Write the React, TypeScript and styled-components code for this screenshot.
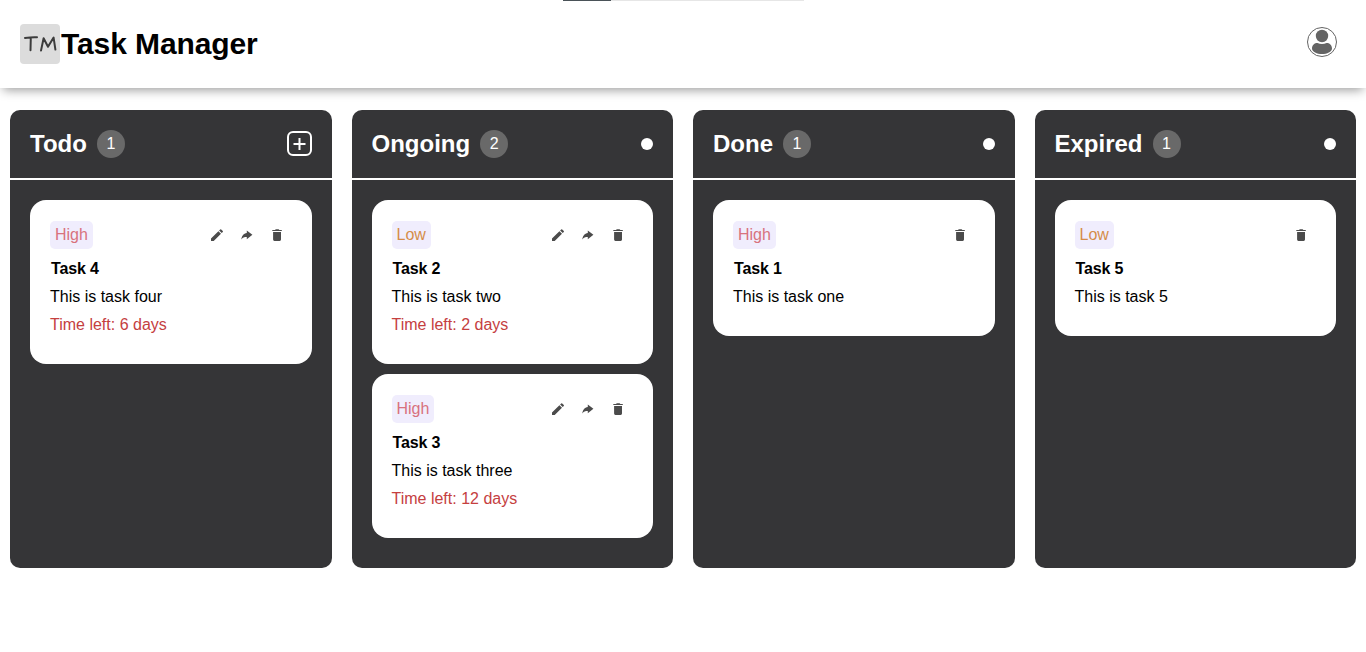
import React from "react";
import styled, { createGlobalStyle } from "styled-components";

const GlobalStyle = createGlobalStyle`
  * { box-sizing: border-box; margin: 0; padding: 0; }
  body { background: #fff; font-family: "Liberation Sans", Arial, sans-serif; font-size: 16px; color: #000; }
`;

const Page = styled.div`
  height: 652px;
  overflow: hidden;
`;

const Progress = styled.div`
  position: absolute;
  top: 0;
  left: 563px;
  width: 241px;
  height: 1px;
  background: #e6e6e6;
`;

const ProgressValue = styled.div`
  width: 48px;
  height: 1px;
  background: #4a5258;
`;

const Header = styled.header`
  height: 88px;
  padding: 0 29px 0 20px;
  display: flex;
  align-items: center;
  justify-content: space-between;
  box-shadow: 0 5px 10px -3px rgba(0, 0, 0, 0.4);
`;

const Brand = styled.div`
  display: flex;
  align-items: center;
  gap: 1px;
`;

const Logo = styled.svg`
  width: 40px;
  height: 40px;
  border-radius: 4px;
  background: #dcdcdc;
`;

const Title = styled.h1`
  font-size: 30px;
  line-height: 40px;
  font-weight: 700;
  letter-spacing: -0.1px;
`;

const Avatar = styled.svg`
  width: 30px;
  height: 30px;
  margin-bottom: 4px;
`;

const Board = styled.main`
  display: grid;
  grid-template-columns: repeat(4, 1fr);
  gap: 20px;
  padding: 22px 10px;
`;

const Column = styled.section`
  height: 458px;
  border-radius: 10px;
  background: #353537;
`;

const ColumnHeader = styled.div`
  height: 70px;
  padding: 0 20px;
  display: flex;
  align-items: center;
  justify-content: space-between;
  border-bottom: 2px solid #fff;
`;

const ColumnName = styled.div`
  display: flex;
  align-items: center;
  gap: 10px;
  color: #fff;
`;

const ColumnTitle = styled.h2`
  font-size: 24px;
  line-height: 28px;
`;

const Count = styled.span`
  width: 28px;
  height: 28px;
  border-radius: 50%;
  background: #696969;
  text-align: center;
  line-height: 27px;
`;

const AddButton = styled.button`
  width: 25px;
  height: 25px;
  margin-bottom: 1px;
  border: 2px solid #fff;
  border-radius: 6px;
  background: transparent;
  display: flex;
  align-items: center;
  justify-content: center;
`;

const Dot = styled.span`
  width: 12px;
  height: 12px;
  border-radius: 50%;
  background: #fff;
`;

const Cards = styled.div`
  padding: 20px;
  display: flex;
  flex-direction: column;
  gap: 10px;
`;

const Card = styled.article`
  padding: 20px 20px 25px;
  border-radius: 16px;
  background: #fff;
`;

const CardTop = styled.div`
  display: flex;
  align-items: center;
  justify-content: space-between;
  height: 30px;
  margin-bottom: 5px;
`;

const Priority = styled.span<{ $color: string }>`
  height: 28px;
  padding: 0 5px;
  border-radius: 5px;
  background: #f0edfd;
  color: ${(p) => p.$color};
  line-height: 27px;
`;

const Actions = styled.div`
  display: flex;
  gap: 14px;
  padding-right: 7px;
`;

const ActionIcon = styled.svg`
  display: block;
  width: 16px;
  height: 16px;
  fill: #4b4b4b;
`;

const Line = styled.p<{ $color?: string; $bold?: boolean }>`
  height: 28px;
  line-height: 28px;
  color: ${(p) => p.$color || "#000"};
  font-weight: ${(p) => (p.$bold ? 700 : 400)};
  letter-spacing: ${(p) => (p.$bold ? "-0.15px" : "normal")};
  padding-left: ${(p) => (p.$bold ? 1 : 0)}px;
`;

type Task = { name: string; text: string; priority: "High" | "Low"; left?: string; fixed?: boolean };

const colors = { High: "#d8727d", Low: "#d58d49" };

const icons = {
  edit: "M2 14V11.5L9.4 4.2L12 6.8L4.7 14ZM10.1 3.5L11.2 2.4Q11.7 2 12.2 2.4L13.8 4Q14.2 4.5 13.8 5L12.7 6.1Z",
  share: "M7.8 3.4L13.4 7.8L7.8 12.3V9.9C5.2 9.9 3.6 10.4 2.3 12.6C2.6 9 4.6 6.3 7.8 5.9Z",
  trash: "M3.3 3H6L6.8 2.2H9.6L10.4 3H12.8V4.1H3.3ZM4.1 4.9H12V12.6Q12 14 10.7 14H5.4Q4.1 14 4.1 12.6Z",
};

const columns: { title: string; tasks: Task[] }[] = [
  { title: "Todo", tasks: [{ name: "Task 4", text: "This is task four", priority: "High", left: "6 days" }] },
  {
    title: "Ongoing",
    tasks: [
      { name: "Task 2", text: "This is task two", priority: "Low", left: "2 days" },
      { name: "Task 3", text: "This is task three", priority: "High", left: "12 days" },
    ],
  },
  { title: "Done", tasks: [{ name: "Task 1", text: "This is task one", priority: "High", fixed: true }] },
  { title: "Expired", tasks: [{ name: "Task 5", text: "This is task 5", priority: "Low", fixed: true }] },
];

function Icon({ name }: { name: keyof typeof icons }) {
  return (
    <ActionIcon viewBox="0 0 16 16">
      <path d={icons[name]} />
    </ActionIcon>
  );
}

function TaskCard({ task }: { task: Task }) {
  return (
    <Card>
      <CardTop>
        <Priority $color={colors[task.priority]}>{task.priority}</Priority>
        <Actions>
          {!task.fixed && <Icon name="edit" />}
          {!task.fixed && <Icon name="share" />}
          <Icon name="trash" />
        </Actions>
      </CardTop>
      <Line $bold>{task.name}</Line>
      <Line>{task.text}</Line>
      {task.left && <Line $color="#c5403f">Time left: {task.left}</Line>}
    </Card>
  );
}

export default function App() {
  return (
    <Page>
      <GlobalStyle />
      <Progress>
        <ProgressValue />
      </Progress>
      <Header>
        <Brand>
          <Logo viewBox="0 0 40 40" fill="none" stroke="#3c3c3c" strokeWidth="2" strokeLinecap="round" strokeLinejoin="round">
            <path d="M5 13.9C9 13.4 13 13 17 13.3M10.8 13.6L10.5 26.2" />
            <path d="M21 26.6L23.6 14.2L28 22.8L33.6 13.6L35.4 25.6" />
          </Logo>
          <Title>Task Manager</Title>
        </Brand>
        <Avatar viewBox="0 0 30 30" fill="#646464">
          <circle cx="15" cy="15" r="14.5" fill="none" stroke="#646464" />
          <circle cx="15" cy="9" r="6.2" />
          <path d="M5 21.5C5 18 7.5 16 10.5 16Q12.5 17 15 17T19.5 16C22.5 16 25 18 25 21.5C25 25 20 27 15 27S5 25 5 21.5Z" />
        </Avatar>
      </Header>
      <Board>
        {columns.map((c, i) => (
          <Column key={c.title}>
            <ColumnHeader>
              <ColumnName>
                <ColumnTitle>{c.title}</ColumnTitle>
                <Count>{c.tasks.length}</Count>
              </ColumnName>
              {i === 0 ? (
                <AddButton aria-label="Add task">
                  <svg width="13" height="13" stroke="#fff" strokeWidth="2">
                    <path d="M0.5 7H12.5M6.5 1V13" />
                  </svg>
                </AddButton>
              ) : (
                <Dot />
              )}
            </ColumnHeader>
            <Cards>
              {c.tasks.map((t) => (
                <TaskCard key={t.name} task={t} />
              ))}
            </Cards>
          </Column>
        ))}
      </Board>
    </Page>
  );
}
